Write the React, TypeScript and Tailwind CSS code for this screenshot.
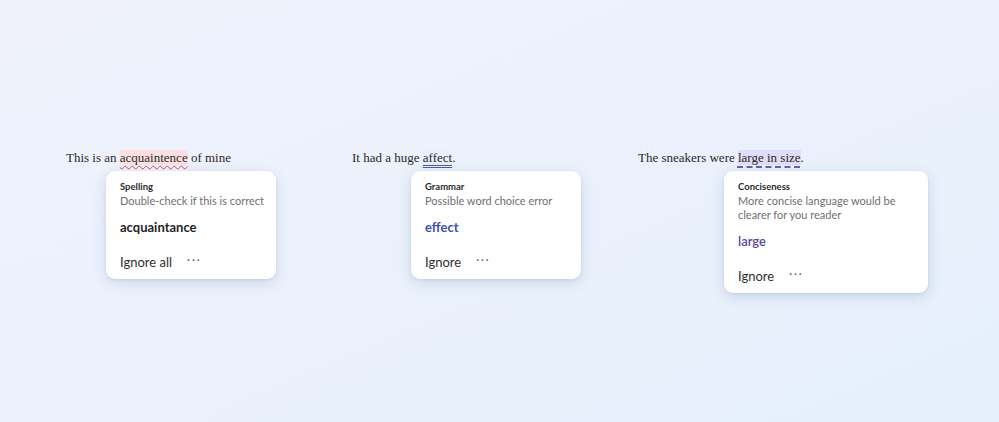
const serif = 'font-["Liberation_Serif","DejaVu_Serif",serif]';
const sans = 'font-["Lato","Noto_Sans",sans-serif]';

type Card = {
  label: string;
  desc: string[];
  suggestion: string;
  suggestionClass: string;
  action: string;
};

function SuggestionCard({ card, className }: { card: Card; className: string }) {
  return (
    <div
      className={`bg-white rounded-[9px] shadow-[0_4px_14px_rgba(60,80,130,0.16),0_1px_3px_rgba(60,80,130,0.10)] pl-[14px] pr-[10px] pt-[9px] pb-[7px] ${sans} ${className}`}
    >
      <div className="text-[9.5px] leading-[14px] font-bold text-[#2c2c2c]">{card.label}</div>
      {card.desc.map((d) => (
        <div key={d} className="whitespace-nowrap text-[11px] leading-[14px] text-[#6f6f6f]">
          {d}
        </div>
      ))}
      <div className={`mt-[10px] text-[13px] leading-[18px] ${card.suggestionClass}`}>
        {card.suggestion}
      </div>
      <div className="mt-[16px] flex items-center gap-[15px] text-[13px] leading-[20px] text-[#2f2f2f]">
        <span>{card.action}</span>
        <span className="text-[11px] tracking-[2px] text-[#555] -mt-[5px]">···</span>
      </div>
    </div>
  );
}

export default function App() {
  return (
    <div className="w-[999px] h-[422px] overflow-hidden bg-gradient-to-br from-[#eff2fb] via-[#ebf1fc] to-[#e5f0fc]">
      <div className="flex pl-[66px] pt-[149px]">
        {/* Spelling */}
        <div className="w-[286px] flex flex-col">
          <p className={`${serif} text-[13px] leading-[18px] text-[#2a2a2a]`}>
            This is an{' '}
            <span className="bg-[#fbe0e2] underline decoration-wavy decoration-[#d9454f] decoration-1 underline-offset-[3px]">
              acquaintence
            </span>{' '}
            of mine
          </p>
          <SuggestionCard
            className="mt-[4px] ml-[40px] w-[170px]"
            card={{
              label: 'Spelling',
              desc: ['Double-check if this is correct'],
              suggestion: 'acquaintance',
              suggestionClass: 'text-[#1f1f1f] font-bold',
              action: 'Ignore all',
            }}
          />
        </div>

        {/* Grammar */}
        <div className="w-[286px] flex flex-col">
          <p className={`${serif} text-[13px] leading-[18px] text-[#2a2a2a]`}>
            It had a huge{' '}
            <span className="bg-[#e9eefb] underline decoration-double decoration-[#4b5d98] decoration-1 underline-offset-[3px]">
              affect
            </span>
            .
          </p>
          <SuggestionCard
            className="mt-[4px] ml-[59px] w-[170px]"
            card={{
              label: 'Grammar',
              desc: ['Possible word choice error'],
              suggestion: 'effect',
              suggestionClass: 'text-[#3c51a8] font-bold',
              action: 'Ignore',
            }}
          />
        </div>

        {/* Conciseness */}
        <div className="w-[290px] flex flex-col">
          <p className={`${serif} text-[13px] leading-[18px] text-[#2a2a2a]`}>
            The sneakers were{' '}
            <span className="bg-[#e2dcf7] underline decoration-dashed decoration-[#6b5cb8] decoration-2 underline-offset-[4px]">
              large in size
            </span>
            .
          </p>
          <SuggestionCard
            className="mt-[4px] ml-[86px] w-[204px]"
            card={{
              label: 'Conciseness',
              desc: ['More concise language would be', 'clearer for you reader'],
              suggestion: 'large',
              suggestionClass: 'text-[#57499e] font-semibold',
              action: 'Ignore',
            }}
          />
        </div>
      </div>
    </div>
  );
}
